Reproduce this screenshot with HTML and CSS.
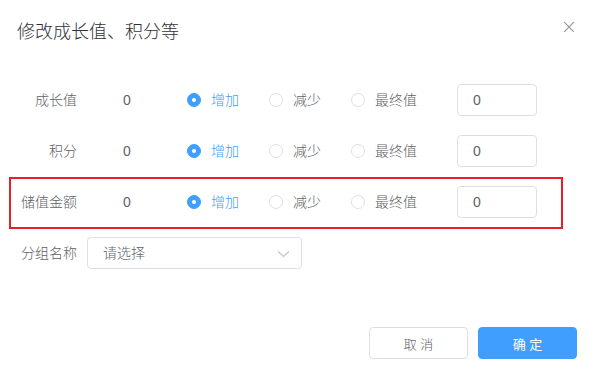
FILE: index.html
```html
<!DOCTYPE html>
<html lang="zh-CN">
<head>
<meta charset="utf-8">
<title>修改成长值、积分等</title>
<link rel="stylesheet" href="styles.css">
</head>
<body>
<div class="dialog">
  <div class="header">
    <span class="title">修改成长值、积分等</span>
    <span class="close" aria-label="关闭">
      <svg width="16" height="16" viewBox="0 0 16 16"><path d="M3.2 3.2L12.8 12.8M12.8 3.2L3.2 12.8" stroke="#909399" stroke-width="1.1" fill="none"/></svg>
    </span>
  </div>
  <div class="body">
    <div class="form-item">
      <label class="label">成长值</label>
      <span class="value">0</span>
      <div class="radios">
        <span class="radio checked"><span class="dot"></span><span class="rtext">增加</span></span>
        <span class="radio"><span class="dot"></span><span class="rtext">减少</span></span>
        <span class="radio"><span class="dot"></span><span class="rtext">最终值</span></span>
      </div>
      <input class="num" type="text" value="0">
    </div>
    <div class="form-item">
      <label class="label">积分</label>
      <span class="value">0</span>
      <div class="radios">
        <span class="radio checked"><span class="dot"></span><span class="rtext">增加</span></span>
        <span class="radio"><span class="dot"></span><span class="rtext">减少</span></span>
        <span class="radio"><span class="dot"></span><span class="rtext">最终值</span></span>
      </div>
      <input class="num" type="text" value="0">
    </div>
    <div class="form-item marked">
      <label class="label">储值金额</label>
      <span class="value">0</span>
      <div class="radios">
        <span class="radio checked"><span class="dot"></span><span class="rtext">增加</span></span>
        <span class="radio"><span class="dot"></span><span class="rtext">减少</span></span>
        <span class="radio"><span class="dot"></span><span class="rtext">最终值</span></span>
      </div>
      <input class="num" type="text" value="0">
    </div>
    <div class="form-item">
      <label class="label">分组名称</label>
      <div class="select">
        <span class="placeholder">请选择</span>
        <svg class="chev" width="13" height="8" viewBox="0 0 13 8"><path d="M1 1.5L6.5 6.5L12 1.5" stroke="#c0c4cc" stroke-width="1.1" fill="none"/></svg>
      </div>
    </div>
  </div>
  <div class="footer">
    <button class="btn">取 消</button>
    <button class="btn primary">确 定</button>
  </div>
</div>
</body>
</html>
```
FILE: styles.css
```css
* { box-sizing: border-box; }
html, body { margin: 0; padding: 0; background: #fff; }
body {
  font-family: "Helvetica Neue", "Liberation Sans", "Noto Sans CJK SC", sans-serif;
  color: #606266;
  font-size: 14px;
  font-weight: 300;
}
.dialog {
  width: 594px;
  height: 378px;
  padding: 20px 17px 0 17px;
  overflow: hidden;
}
.header {
  display: flex;
  justify-content: space-between;
  align-items: flex-start;
  height: 24px;
}
.title {
  font-size: 18px;
  line-height: 24px;
  color: #303133;
}
.close {
  width: 16px;
  height: 16px;
  margin-top: -1px;
  display: block;
}
.close svg { display: block; }
.body {
  padding-top: 40px;
  display: flex;
  flex-direction: column;
  gap: 19px;
}
.form-item {
  display: flex;
  align-items: center;
  height: 32px;
  position: relative;
}
.marked::after {
  content: "";
  position: absolute;
  top: -9px;
  bottom: -11px;
  left: -8px;
  right: 14px;
  border: 2px solid #e6202a;
  pointer-events: none;
}
.label {
  width: 70px;
  padding-right: 10px;
  text-align: right;
  line-height: 32px;
  color: #606266;
  flex: none;
}
.value {
  width: 100px;
  padding-left: 36px;
  flex: none;
  line-height: 32px;
}
.radios {
  width: 270px;
  display: flex;
  align-items: center;
  flex: none;
}
.radio {
  display: inline-flex;
  align-items: center;
  margin-right: 30px;
  line-height: 20px;
}
.radio:last-child { margin-right: 0; }
.dot {
  width: 14px;
  height: 14px;
  border-radius: 50%;
  border: 1px solid #dcdfe6;
  background: #fff;
  position: relative;
  flex: none;
}
.rtext { padding-left: 10px; color: #606266; }
.radio.checked .dot {
  background: #409eff;
  border-color: #409eff;
}
.radio.checked .dot::after {
  content: "";
  position: absolute;
  width: 4px;
  height: 4px;
  border-radius: 50%;
  background: #fff;
  left: 4px;
  top: 4px;
}
.radio.checked .rtext { color: #409eff; }
.num {
  width: 80px;
  height: 32px;
  border: 1px solid #dcdfe6;
  border-radius: 4px;
  padding: 0 15px;
  font: inherit;
  font-size: 14px;
  color: #606266;
  outline: none;
}
.select {
  width: 215px;
  height: 32px;
  border: 1px solid #dcdfe6;
  border-radius: 4px;
  padding: 0 11px 0 15px;
  display: flex;
  align-items: center;
  justify-content: space-between;
}
.placeholder { color: #606266; line-height: 30px; }
.chev { display: block; margin-top: 1px; }
.footer {
  display: flex;
  justify-content: flex-end;
  gap: 10px;
  margin-top: 58px;
}
.btn {
  width: 99px;
  height: 32px;
  border: 1px solid #dcdfe6;
  border-radius: 4px;
  background: #fff;
  color: #606266;
  font-family: inherit;
  font-size: 13px;
  font-weight: 300;
  padding: 0;
  cursor: pointer;
}
.btn.primary {
  background: #409eff;
  border-color: #409eff;
  color: #fff;
  font-weight: 400;
}
```
